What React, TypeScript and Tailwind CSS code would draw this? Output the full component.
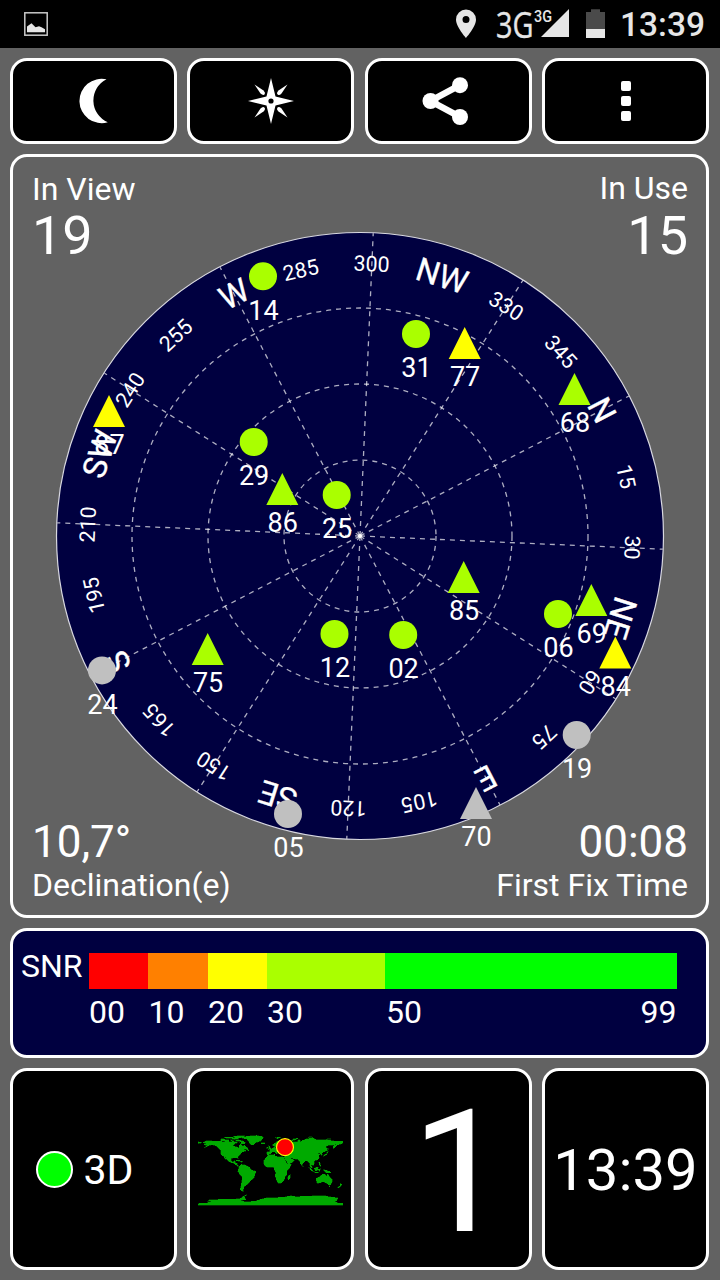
import type { ReactNode } from "react";

type Satellite = { id: string; x: number; y: number; shape: "circle" | "triangle"; color: string };

const LIME = "#aaff00";
const YELLOW = "#ffff00";
const GREY = "#c0c0c0";

const satellites: Satellite[] = [
  { id: "14", x: 263, y: 276.3, shape: "circle", color: LIME },
  { id: "31", x: 416, y: 334, shape: "circle", color: LIME },
  { id: "29", x: 253.7, y: 442, shape: "circle", color: LIME },
  { id: "25", x: 336.7, y: 495, shape: "circle", color: LIME },
  { id: "12", x: 334.5, y: 634, shape: "circle", color: LIME },
  { id: "02", x: 403.2, y: 635, shape: "circle", color: LIME },
  { id: "06", x: 558, y: 614, shape: "circle", color: LIME },
  { id: "24", x: 102, y: 670.4, shape: "circle", color: GREY },
  { id: "05", x: 288, y: 814, shape: "circle", color: GREY },
  { id: "19", x: 576.7, y: 735, shape: "circle", color: GREY },
  { id: "77", x: 464.7, y: 343, shape: "triangle", color: YELLOW },
  { id: "68", x: 574.5, y: 389, shape: "triangle", color: LIME },
  { id: "69", x: 591.3, y: 600, shape: "triangle", color: LIME },
  { id: "85", x: 463.7, y: 577, shape: "triangle", color: LIME },
  { id: "84", x: 615.3, y: 652.6, shape: "triangle", color: YELLOW },
  { id: "86", x: 282.3, y: 489, shape: "triangle", color: LIME },
  { id: "87", x: 109, y: 411, shape: "triangle", color: YELLOW },
  { id: "75", x: 207.7, y: 649, shape: "triangle", color: LIME },
  { id: "70", x: 476, y: 803, shape: "triangle", color: GREY },
];

const CX = 360;
const CY = 536;
const NORTH = 62.5;
const cardinals: Record<number, string> = { 0: "N", 45: "NE", 90: "E", 135: "SE", 180: "S", 225: "SW", 270: "W", 315: "NW" };
const bearings = Array.from({ length: 24 }, (_, i) => i * 15);

function SkyPlot() {
  return (
    <svg className="absolute left-0 top-0 h-[758px] w-[693px]" viewBox="13 157 693 758" fontFamily="Roboto, sans-serif" fill="#fff" textAnchor="middle">
      <circle cx={CX} cy={CY} r="303.5" fill="#000040" stroke="#d8d8e0" strokeWidth="1.2" />
      <g fill="none" stroke="#fff" strokeOpacity="0.68" strokeWidth="1.3" strokeDasharray="5 5">
        {[76, 152, 228].map((r) => (
          <circle key={r} cx={CX} cy={CY} r={r} />
        ))}
        {bearings
          .filter((b) => b % 30 === 0)
          .map((b) => (
            <line key={b} x1={CX} y1={CY} x2={CX} y2={CY - 303} transform={`rotate(${b + NORTH} ${CX} ${CY})`} />
          ))}
      </g>
      <circle cx={CX} cy={CY} r="2" />
      {bearings.map((b) => {
        const name = cardinals[b];
        return (
          <text
            key={b}
            x={name ? CX : CX - 0.3}
            y={name ? CY - 261.5 : CY - 265}
            fontSize={name ? 32.5 : 21.4}
            stroke="#fff"
            strokeWidth={name ? 0.3 : 0}
            transform={`rotate(${b + NORTH} ${CX} ${CY})`}
          >
            {name ?? b}
          </text>
        );
      })}
      {satellites.map((s) => (
        <g key={s.id}>
          {s.shape === "circle" ? (
            <circle cx={s.x} cy={s.y} r="14" fill={s.color} />
          ) : (
            <polygon points={`${s.x},${s.y - 16} ${s.x + 16},${s.y + 16} ${s.x - 16},${s.y + 16}`} fill={s.color} />
          )}
          <text x={s.x + 0.4} y={s.y + 43.2} fontSize="27">
            {s.id}
          </text>
        </g>
      ))}
    </svg>
  );
}

const land = [
  "-168,66 -162,70 -156,71 -141,70 -128,70 -115,68 -108,68 -96,68 -94,72 -90,69 -82,69 -82,66 -87,64 -94,59 -88,56.5 -82,55 -80,51 -78,55 -77,60 -74,62 -68,58 -64,60 -61,56 -56,52 -60,50 -66,50 -60,46 -70,43 -74,40 -76,35 -81,31 -80,25 -83,29 -90,29 -97,27 -97,21 -94,18 -91,19 -90,21 -87,21 -88,16 -83,15 -83,10 -79,9 -77,8 -80,7 -85,10 -88,13 -95,16 -105,20 -106,23 -112,30 -110,23 -115,29 -117,33 -121,35 -124,40 -124,47 -130,54 -137,59 -146,61 -152,59 -158,56 -165,54 -158,59 -165,61 -161,64 -168,66",
  "-180,69 -174,67 -170,66 -174,64 -178,66 -180,64",
  "-124,75 -117,76 -112,73 -104,73 -104,69 -114,69 -118,71 -124,71",
  "-100,73 -93,74 -93,72 -98,71",
  "-90,74 -80,73 -70,71 -62,66 -66,62 -72,64 -76,69 -86,71",
  "-116,78 -100,77 -92,76 -80,76 -82,78 -95,79 -112,80",
  "-92,81 -80,83 -63,83 -70,80 -80,77 -88,78",
  "-73,78 -60,82 -35,84 -18,81 -20,74 -25,70 -37,66 -43,60 -50,62 -54,68 -58,75",
  "-24,66 -14,66 -15,63 -22,63",
  "-85,22 -78,23 -74,20 -78,20",
  "-73,20 -68,19 -70,18 -74,18",
  "-60,51 -53,48 -55,46 -59,48",
  "-77,8 -72,12 -62,10 -52,5 -50,0 -35,-6 -39,-14 -41,-22 -48,-26 -54,-34 -58,-38 -65,-42 -67,-48 -69,-52 -65,-55 -72,-54 -75,-50 -73,-40 -71,-30 -70,-18 -76,-14 -81,-5 -80,0",
  "-6,35 10,37 11,33 20,31 32,31 36,22 43,12 51,12 48,4 40,-4 40,-15 35,-20 35,-25 31,-30 26,-34 19,-35 15,-27 12,-17 13,-8 9,1 8,5 -8,5 -13,8 -17,14 -17,21 -10,30",
  "44,-16 50,-13 48,-23 45,-26 43,-22",
  "-9,43 -2,43 -1,47 -5,48 2,51 8,54 9,57 12,54 20,55 24,59 29,60 22,61 25,65 22,66 17,61 16,57 13,56 10,59 5,59 5,62 12,66 18,70 28,71 40,68 34,66 44,66 46,68 60,69 68,69 68,73 73,73 74,68 80,72 88,75 104,78 113,74 128,73 140,73 160,70 170,70 180,69 180,65 176,63 165,60 162,56 157,51 155,58 163,62 153,60 143,59 135,55 141,52 139,46 131,43 127,39 129,35 126,35 123,40 118,39 122,37 119,33 121,28 116,23 108,21 109,12 105,9 100,13 104,2 102,2 98,8 98,16 94,17 91,22 87,21 80,15 78,8 74,15 72,21 67,25 57,26 50,30 52,25 56,25 59,22 53,16 44,13 39,21 34,29 36,36 27,37 27,40 36,41 41,42 38,46 30,46 28,41 23,37 19,42 13,45 18,40 15,38 10,43 5,43 -1,38 -6,36 -9,37",
  "-5,50 1,51 -2,57 -5,58 -4,54",
  "-10,52 -6,53 -7,55 -10,54",
  "52,71 58,76 69,77 58,72",
  "12,78 20,80 27,80 18,76",
  "94,80 105,79 100,81",
  "138,75 150,75 146,76",
  "142,54 144,49 142,46",
  "130,32 136,34 140,36 142,41 145,44 140,43 139,38 133,36",
  "120,18 122,18 124,12 126,7 122,8 121,14",
  "80,9 82,7 80,6",
  "95,5 101,1 106,-5 103,-5 97,2",
  "105,-6 114,-7 120,-9 113,-9",
  "109,2 115,5 119,5 116,-3 111,-3",
  "119,0 125,1 122,-1 123,-5 120,-5",
  "131,-1 141,-3 148,-6 150,-10 144,-8 138,-8 133,-4",
  "114,-22 122,-18 130,-12 136,-12 136,-15 140,-17 142,-11 146,-18 153,-25 153,-31 150,-38 144,-38 138,-34 131,-31 124,-33 116,-35 114,-28",
  "145,-41 148,-41 147,-44",
  "173,-35 178,-38 175,-41 173,-40",
  "172,-41 174,-42 168,-47 167,-45",
  "-180,-85 -155,-84 -157,-80 -147,-80 -154,-77 -148,-75 -130,-75 -115,-74 -100,-75 -76,-73 -66,-66 -58,-63 -65,-67 -62,-75 -75,-78 -62,-81 -38,-79 -25,-75 -10,-71 20,-70 35,-69 50,-66 65,-68 85,-67 110,-66 135,-66 150,-69 168,-71 165,-77 160,-80 169,-84 180,-85 180,-89 -180,-89",
];

function WorldMap() {
  return (
    <svg className="h-[73px] w-[145px]" viewBox="-180 -90 360 181" shapeRendering="crispEdges">
      <g transform="scale(1 -1)" fill="#00aa00" stroke="#00aa00" strokeWidth="0.8">
        {land.map((p) => (
          <polygon key={p} points={p} />
        ))}
      </g>
      <circle cx="36" cy="-55" r="21" fill="#ff0000" stroke="#ffff00" strokeWidth="2.8" shapeRendering="auto" />
    </svg>
  );
}

function Tile({ children, className = "" }: { children: ReactNode; className?: string }) {
  return (
    <div className={`flex w-[167px] items-center justify-center rounded-[17px] border-[3px] border-white bg-black ${className}`}>
      {children}
    </div>
  );
}

function StatusBar() {
  return (
    <header className="flex h-12 items-center justify-between bg-black pl-6 pr-4">
      <svg className="size-6" viewBox="0 0 24 24">
        <rect x="0.8" y="0.8" width="22.4" height="22.4" fill="none" stroke="#c9c9c9" strokeWidth="1.5" />
        <path d="M3 20.2v-5.700l4.500-3.200 4 4 3.500-1 2.500 1 3.500 2v2.900z" fill="#e6e6e6" />
      </svg>
      <div className="flex items-center">
        <svg className="h-12 w-[166px]" viewBox="450 0 166 48" fill="#e6e6e6" fontFamily="Roboto, sans-serif">
          <path fillRule="evenodd" d="M466 9.600a10 10 0 0 0-10 10c0 7.500 10 18.400 10 18.400s10-10.900 10-18.400a10 10 0 0 0-10-10zm0 13.500a3.500 3.500 0 1 1 0-7 3.500 3.500 0 0 1 0 7z" />
          <text x="496" y="38" fontSize="36.500" fontFamily="'Open Sans', sans-serif" textLength="37.500" lengthAdjust="spacingAndGlyphs" stroke="#e6e6e6" strokeWidth="0.4">3G</text>
          <text x="534" y="21.500" fontSize="16.500" fontWeight="500" textLength="18" lengthAdjust="spacingAndGlyphs">3G</text>
          <path d="M541 37H569V9z" />
          <path d="M586 29V12h5V9.300h9V12h5v17z" fill="#4a4a4a" />
          <path d="M586 29h19v9h-19z" />
        </svg>
        <span className="ml-1 w-[84px] whitespace-nowrap pt-0.5 text-[33.500px] font-medium leading-none text-[#e6e6e6]">13:39</span>
      </div>
    </header>
  );
}

function Toolbar() {
  return (
    <nav className="flex h-[86px] justify-between">
      <Tile>
        <svg className="size-12" viewBox="69.500 77 48 48" fill="#fff">
          <path d="M106 79.300A22.200 22.200 0 1 0 107.300 122.300A23.700 23.700 0 0 1 106 79.300z" />
        </svg>
      </Tile>
      <Tile>
        <svg className="size-12" viewBox="-24 -24 48 48" fill="#fff">
          <path fillRule="evenodd" d="M0-23L4.500-4.500 23 0 4.500 4.500 0 23-4.500 4.500-23 0-4.500-4.500zM0-2.600a2.600 2.600 0 1 0 0 5.200 2.600 2.600 0 0 0 0-5.200z" />
          {[0, 90, 180, 270].map((a) => (
            <path key={a} transform={`rotate(${a})`} d="M16.500-16.500L7.500-10.500Q4.800-7.500 7-6.200Q8.500-5.400 10.500-7.500z" />
          ))}
        </svg>
      </Tile>
      <Tile>
        <svg className="h-12 w-[52px]" viewBox="422.500 77 52 48" fill="#fff">
          <path d="M460.500 85.200L431 101L460.500 116.800" fill="none" stroke="#fff" strokeWidth="6.500" />
          <circle cx="431" cy="101" r="8" />
          <circle cx="460.500" cy="85.200" r="8" />
          <circle cx="460.500" cy="117" r="8" />
        </svg>
      </Tile>
      <Tile>
        <div className="ml-px flex flex-col gap-[5px]">
          <i className="size-2.5 rounded-xs bg-white" />
          <i className="size-2.5 rounded-xs bg-white" />
          <i className="size-2.5 rounded-xs bg-white" />
        </div>
      </Tile>
    </nav>
  );
}

function SnrLegend() {
  return (
    <section className="flex h-[130px] rounded-[17px] border-[3px] border-white bg-[#000040] pl-2 pt-[22px] text-[32px]">
      <div className="mt-[-3px] w-[68px] leading-8">SNR</div>
      <div className="w-[587.500px]">
        <div className="flex h-9">
          <div className="w-[59.300px] bg-[#ff0000]" />
          <div className="w-[59.400px] bg-[#ff8000]" />
          <div className="w-[59.300px] bg-[#ffff00]" />
          <div className="w-[118px] bg-[#aaff00]" />
          <div className="flex-1 bg-[#00ff00]" />
        </div>
        <div className="mt-[7px] flex leading-8">
          <span className="w-[59.500px]">00</span>
          <span className="w-[59.500px]">10</span>
          <span className="w-[59px]">20</span>
          <span className="w-[119px]">30</span>
          <span className="flex-1">50</span>
          <span>99</span>
        </div>
      </div>
    </section>
  );
}

export default function App() {
  return (
    <div className="h-[1280px] w-[720px] overflow-hidden bg-[#626262] font-[Roboto,sans-serif] text-white">
      <StatusBar />
      <main className="flex flex-col gap-2.5 pb-2.5 pl-2.5 pr-[11px] pt-2.5">
        <Toolbar />
        <section className="relative flex h-[764px] flex-col justify-between rounded-[17px] border-[3px] border-white pb-3.5 pl-[19px] pr-[18px] pt-[15px]">
          <SkyPlot />
          <div className="flex justify-between">
            <div className="pt-px">
              <div className="text-[32px] leading-8">In View</div>
              <div className="mt-1 text-[54px] leading-[54px]">19</div>
            </div>
            <div className="text-right">
              <div className="text-[32px] leading-8">In Use</div>
              <div className="mt-[5px] text-[54px] leading-[54px]">15</div>
            </div>
          </div>
          <div className="flex justify-between">
            <div>
              <div className="text-[44px] leading-[44px]">10,7°</div>
              <div className="mt-[5px] text-[32px] leading-8">Declination(e)</div>
            </div>
            <div className="text-right">
              <div className="text-[44px] leading-[44px]">00:08</div>
              <div className="mt-[5px] text-[32px] leading-8">First Fix Time</div>
            </div>
          </div>
        </section>
        <SnrLegend />
        <section className="flex h-[202px] justify-between">
          <Tile className="gap-[11px] pr-[18px]">
            <i className="size-[37px] rounded-full border-2 border-white bg-[#00ff00]" />
            <span className="pt-0.5 text-[41px] leading-none">3D</span>
          </Tile>
          <Tile>
            <WorldMap />
          </Tile>
          <Tile>
            <span className="ml-[23px] mt-1.5 text-[171px] leading-none">1</span>
          </Tile>
          <Tile>
            <span className="pt-0.5 text-[58px] leading-none">13:39</span>
          </Tile>
        </section>
      </main>
    </div>
  );
}
